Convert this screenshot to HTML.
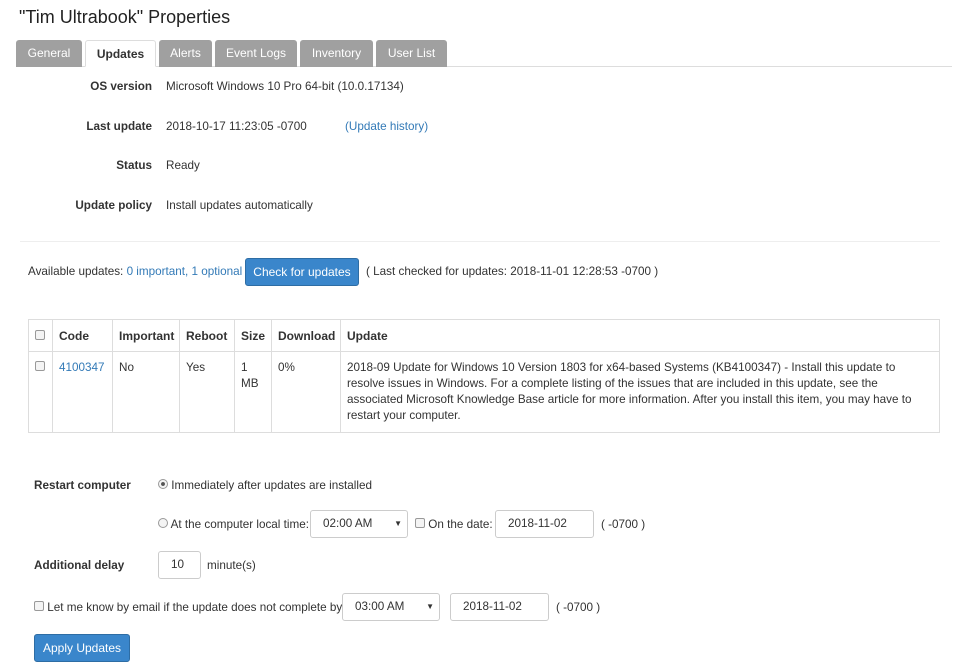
<!DOCTYPE html>
<html><head><style>
*{box-sizing:border-box;margin:0;padding:0}
body{width:960px;height:669px;background:#fff;font-family:"Liberation Sans",Arial,sans-serif;font-size:11.7px;color:#333;position:relative;overflow:hidden}
.a{position:absolute;white-space:nowrap}
h1{position:absolute;left:19px;top:7px;font-size:18px;font-weight:normal;color:#222}
.tab{position:absolute;top:40px;height:27px;background:#a0a0a0;color:#fff;text-align:center;line-height:27px;font-size:12px;border-radius:3px 3px 0 0}
.tab.on{background:#fff;color:#333;font-weight:bold;border:1px solid #ddd;border-bottom:1px solid #fff;height:27px}
.b{font-weight:bold}
.lk{color:#337ab7}
.btn{position:absolute;background:#3a86cb;color:#fff;border:1px solid #2e6da4;border-radius:3px;text-align:center;font-size:12px}
table{position:absolute;left:28px;top:319px;width:912px;border-collapse:collapse;table-layout:fixed}
td,th{border:1px solid #ddd;padding:8px 6px 7px;text-align:left;vertical-align:top;line-height:16px}
th{font-weight:bold;font-size:12px}
.cb{display:inline-block;width:10px;height:10px;border:1px solid #999;background:#f4f4f4;border-radius:2px}
.rd{display:inline-block;width:10px;height:10px;border:1px solid #999;background:#f4f4f4;border-radius:50%;position:relative}
.in{position:absolute;border:1px solid #ccc;border-radius:3px;height:28px;line-height:26px;padding-left:12px;background:#fff}
</style></head><body>
<h1>"Tim Ultrabook" Properties</h1>
<div class="a" style="left:16px;top:66px;width:936px;border-top:1px solid #ddd"></div>
<div class="tab" style="left:16px;width:66px">General</div>
<div class="tab on" style="left:85px;width:71px">Updates</div>
<div class="tab" style="left:159px;width:53px">Alerts</div>
<div class="tab" style="left:215px;width:82px">Event Logs</div>
<div class="tab" style="left:300px;width:73px">Inventory</div>
<div class="tab" style="left:376px;width:71px">User List</div>

<div class="a b" style="right:808px;top:80px">OS version</div>
<div class="a" style="left:166px;top:80px">Microsoft Windows 10 Pro 64-bit (10.0.17134)</div>
<div class="a b" style="right:808px;top:120px">Last update</div>
<div class="a" style="left:166px;top:120px">2018-10-17 11:23:05 -0700</div>
<div class="a" style="left:345px;top:120px"><span class="lk">(Update history)</span></div>
<div class="a b" style="right:808px;top:159px">Status</div>
<div class="a" style="left:166px;top:159px">Ready</div>
<div class="a b" style="right:808px;top:199px">Update policy</div>
<div class="a" style="left:166px;top:199px">Install updates automatically</div>
<div class="a" style="left:20px;top:241px;width:920px;border-top:1px solid #eee"></div>

<div class="a" style="left:28px;top:265px">Available updates: <span class="lk">0 important, 1 optional</span></div>
<div class="btn" style="left:245px;top:258px;width:114px;height:28px;line-height:26px">Check for updates</div>
<div class="a" style="left:366px;top:265px">( Last checked for updates: 2018-11-01 12:28:53 -0700 )</div>

<table>
<colgroup><col style="width:24px"><col style="width:60px"><col style="width:67px"><col style="width:55px"><col style="width:37px"><col style="width:69px"><col></colgroup>
<tr style="height:31px"><th><span class="cb"></span></th><th>Code</th><th>Important</th><th>Reboot</th><th>Size</th><th>Download</th><th>Update</th></tr>
<tr style="height:81px"><td><span class="cb"></span></td><td><span class="lk">4100347</span></td><td>No</td><td>Yes</td><td>1 MB</td><td>0%</td><td style="white-space:normal;padding-right:18px">2018-09 Update for Windows 10 Version 1803 for x64-based Systems (KB4100347) - Install this update to resolve issues in Windows. For a complete listing of the issues that are included in this update, see the associated Microsoft Knowledge Base article for more information. After you install this item, you may have to restart your computer.</td></tr>
</table>

<div class="a b" style="left:34px;top:479px">Restart computer</div>
<div class="a" style="left:158px;top:479px"><span class="rd" style="background:radial-gradient(#555 30%,#f4f4f4 40%)"></span> Immediately after updates are installed</div>
<div class="a" style="left:158px;top:518px"><span class="rd"></span> At the computer local time:</div>
<div class="in" style="left:310px;top:510px;width:98px">02:00 AM<span style="position:absolute;right:5px;font-size:8px">▼</span></div>
<div class="a" style="left:415px;top:518px"><span class="cb"></span> On the date:</div>
<div class="in" style="left:495px;top:510px;width:99px">2018-11-02</div>
<div class="a" style="left:601px;top:518px">( -0700 )</div>
<div class="a b" style="left:34px;top:559px">Additional delay</div>
<div class="in" style="left:158px;top:551px;width:43px">10</div>
<div class="a" style="left:207px;top:559px">minute(s)</div>
<div class="a" style="left:34px;top:601px"><span class="cb"></span> Let me know by email if the update does not complete by</div>
<div class="in" style="left:342px;top:593px;width:98px">03:00 AM<span style="position:absolute;right:5px;font-size:8px">▼</span></div>
<div class="in" style="left:450px;top:593px;width:99px">2018-11-02</div>
<div class="a" style="left:556px;top:601px">( -0700 )</div>
<div class="btn" style="left:34px;top:634px;width:96px;height:28px;line-height:26px">Apply Updates</div>
</body></html>
